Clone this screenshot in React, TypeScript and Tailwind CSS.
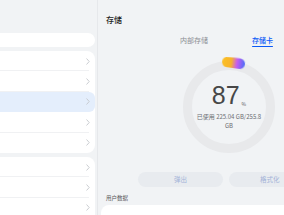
import React from "react";

const font = { fontFamily: '"Noto Sans CJK SC", "Noto Sans", sans-serif' };

function Chevron() {
  return (
    <svg width="4" height="7" viewBox="0 0 4 7" className="shrink-0">
      <path d="M0.8 0.8 L3.2 3.5 L0.8 6.2" fill="none" stroke="#c4c7cc" strokeWidth="0.9" strokeLinecap="round" strokeLinejoin="round" />
    </svg>
  );
}

function Row({ active, last }: { active?: boolean; last?: boolean }) {
  return (
    <div className={`relative flex h-[20.4px] items-center justify-end pr-[5px] ${active ? "bg-[#e4eefc] rounded-r-[6px]" : ""}`}>
      <Chevron />
      {!last && !active && <div className="absolute bottom-0 left-0 right-[6px] h-px bg-[#f0f1f3]" />}
    </div>
  );
}

export default function App() {
  return (
    <div className="flex h-[215px] w-[284px] overflow-hidden bg-[#f1f3f5]" style={font}>
      {/* left list */}
      <div className="w-[95px] shrink-0 pt-[33px]">
        <div className="h-[14px] rounded-r-[7px] bg-white" />
        <div className="mt-[4px] rounded-r-[8px] bg-white">
          <Row />
          <Row />
          <Row active />
          <Row />
          <Row last />
        </div>
        <div className="mt-[4px] rounded-tr-[8px] bg-white">
          <Row />
          <Row />
          <Row />
        </div>
      </div>
      <div className="ml-[2px] w-px shrink-0 bg-[#e6e8eb]" />

      {/* right panel */}
      <div className="flex min-w-0 flex-1 flex-col pl-[2px] *:shrink-0">
        <div className="pl-[6px] pt-[15px] text-[8px] leading-[10px] font-medium text-[#1f1f1f]">存储</div>

        <div className="relative mt-[11px] h-[11px]">
          <span className="absolute left-[80px] top-0 text-[7px] leading-[9px] text-[#8c8f94]">内部存储</span>
          <span className="absolute left-[152px] top-0 text-[7px] leading-[9px] font-medium text-[#0a59f7]">存储卡</span>
          <div className="absolute left-[152px] top-[9.5px] h-[1.2px] w-[21px] rounded bg-[#0a59f7]" />
        </div>

        <div className="relative mt-[10px] h-[100px]">
          <svg width="100" height="100" viewBox="0 0 100 100" className="absolute left-[79px] top-0">
            <defs>
              <linearGradient id="pill" x1="0" y1="0" x2="1" y2="0">
                <stop offset="0" stopColor="#fbbf24" />
                <stop offset="0.4" stopColor="#f7b32b" />
                <stop offset="0.65" stopColor="#c65cf2" />
                <stop offset="1" stopColor="#4a6cf7" />
              </linearGradient>
              <filter id="blur" x="-20%" y="-50%" width="140%" height="200%">
                <feGaussianBlur stdDeviation="0.6" />
              </filter>
            </defs>
            <circle cx="50" cy="50" r="41.5" fill="none" stroke="#e8e9eb" strokeWidth="9" />
            <g transform="rotate(8 54 6)" filter="url(#blur)">
              <rect x="43" y="0.5" width="23" height="10.5" rx="5.25" fill="url(#pill)" />
            </g>
          </svg>
          <div className="absolute left-[79px] top-0 flex h-[100px] w-[100px] flex-col items-center">
            <div className="mt-[26px] flex items-end">
              <span className="text-[25px] leading-[25px] text-[#474747]" style={{ fontFamily: '"Liberation Sans", sans-serif' }}>87</span>
              <span className="mb-[2px] ml-[2px] text-[5px] leading-[5px] text-[#555]">%</span>
            </div>
            <div className="mt-[4px] w-[66px] text-center text-[6px] leading-[9px] text-[#6b6e73]">已使用 225.04 GB/255.8 GB</div>
          </div>
        </div>

        <div className="mt-[15px] flex gap-[6px] pl-[38px]">
          <div className="flex h-[15px] w-[85px] shrink-0 items-center justify-center rounded-full bg-[#e8ebef] text-[6.5px] text-[#a3b3d8]">弹出</div>
          <div className="flex h-[15px] w-[85px] shrink-0 items-center rounded-full bg-[#e8ebef] pl-[31px] text-[6.5px] text-[#a3b3d8] whitespace-nowrap">格式化</div>
        </div>

        <div className="mt-[8px] pl-[6px] text-[5.5px] leading-[7px] text-[#555]">用户数据</div>
        <div className="mt-[3px] ml-[1px] h-[20px] rounded-tl-[8px] bg-white" />
      </div>
    </div>
  );
}
